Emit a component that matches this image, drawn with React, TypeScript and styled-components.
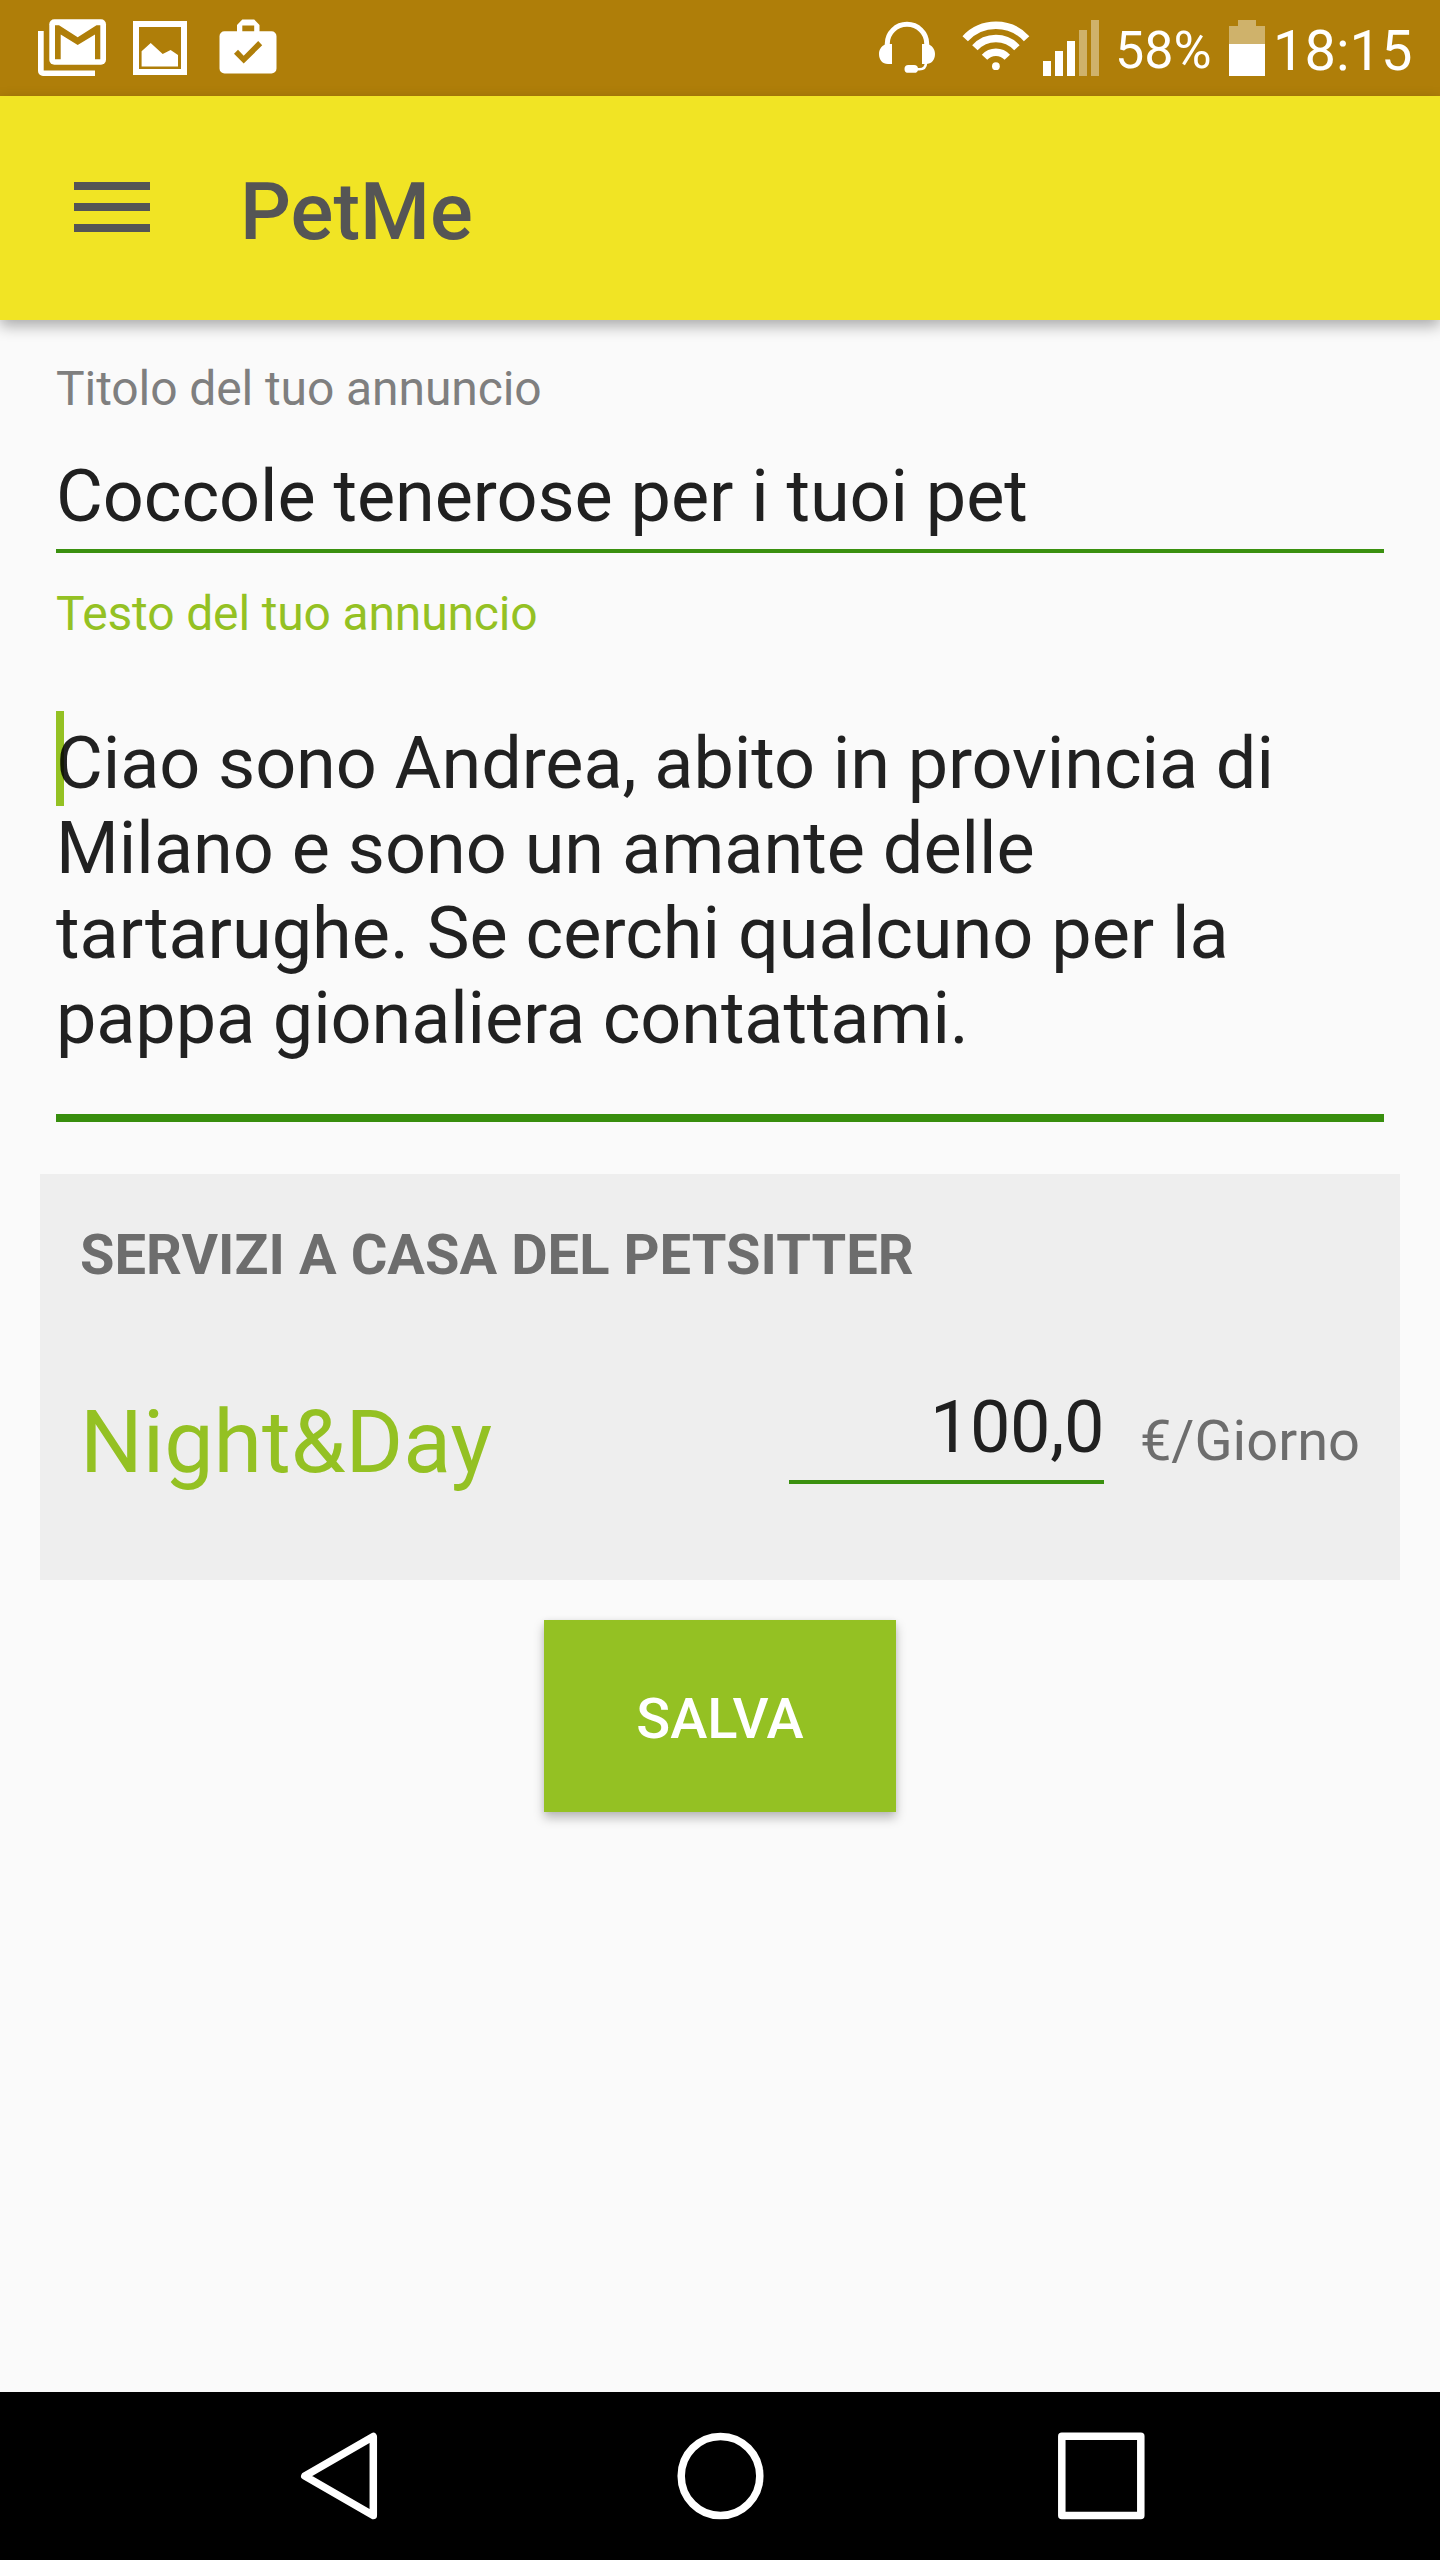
import React from "react";
import styled, { createGlobalStyle } from "styled-components";

const GlobalStyle = createGlobalStyle`
  * { box-sizing: border-box; }
  body {
    margin: 0;
    background: #fafafa;
    font-family: Roboto, "Liberation Sans", sans-serif;
  }
`;

const Screen = styled.div`
  width: 1440px;
  height: 2560px;
  display: flex;
  flex-direction: column;
  background: #fafafa;
  overflow: hidden;
`;

const StatusBar = styled.header`
  height: 96px;
  flex: none;
  display: flex;
  justify-content: space-between;
  background: #af7e09;
  color: #fff;
  padding: 0 28px 0 36px;
`;

const StatusGroup = styled.div`
  display: flex;
  align-items: flex-start;
`;

const StatusIcon = styled.svg<{ $gap?: number }>`
  display: block;
  flex: none;
  margin-left: ${(p) => p.$gap ?? 0}px;
`;

const StatusText = styled.span<{ $size: number; $width: number; $top: number; $gap: number }>`
  width: ${(p) => p.$width}px;
  margin: ${(p) => p.$top}px 0 0 ${(p) => p.$gap}px;
  font-size: ${(p) => p.$size}px;
  line-height: 60px;
  white-space: nowrap;
`;

const AppBar = styled.div`
  height: 224px;
  flex: none;
  display: flex;
  align-items: center;
  padding-left: 74px;
  background: #f1e424;
  box-shadow: 0 6px 14px rgba(0, 0, 0, 0.32);
  z-index: 1;
`;

const MenuButton = styled.div`
  width: 76px;
  height: 50px;
  margin-top: -2px;
  display: flex;
  flex-direction: column;
  justify-content: space-between;
`;

const MenuBar = styled.span`
  height: 8px;
  background: #555;
`;

const AppTitle = styled.h1`
  margin: 7px 0 0 90px;
  font-size: 80px;
  line-height: 96px;
  font-weight: 500;
  color: #555;
`;

const Content = styled.main`
  flex: 1;
  display: flex;
  flex-direction: column;
  padding: 41px 40px 0;
`;

const Field = styled.section`
  display: flex;
  flex-direction: column;
  margin: 0 16px 33px;
`;

const MessageField = styled(Field)`
  margin-bottom: 52px;
`;

const Label = styled.label<{ $active?: boolean }>`
  font-size: 48px;
  line-height: 56px;
  letter-spacing: ${(p) => (p.$active ? -0.15 : -0.09)}px;
  color: ${(p) => (p.$active ? "#94c123" : "#7f7f7f")};
`;

const TextLine = styled.div`
  margin-top: 38px;
  padding-bottom: 10px;
  border-bottom: 4px solid #3a900f;
  font-size: 72px;
  line-height: 84px;
  letter-spacing: -0.06px;
  color: #202020;
`;

const TextArea = styled.div`
  position: relative;
  margin-top: 79px;
  padding-bottom: 53px;
  border-bottom: 8px solid #388e0d;
  font-size: 72px;
  line-height: 85px;
  color: rgba(0, 0, 0, 0.87);
`;

const Caret = styled.span`
  position: absolute;
  left: 0;
  top: -10px;
  width: 8px;
  height: 95px;
  background: #94c123;
  z-index: -1;
`;

const AreaText = styled.div`
  isolation: isolate;
`;

const AreaLine = styled.div<{ $tracking: number }>`
  letter-spacing: ${(p) => p.$tracking}px;
  white-space: nowrap;
`;

const Card = styled.section`
  height: 406px;
  padding: 48px 40px 0;
  background: #eee;
`;

const CardTitle = styled.h2`
  margin: 0;
  font-size: 56px;
  line-height: 66px;
  font-weight: 700;
  letter-spacing: 0.05px;
  color: #6d6d6d;
`;

const ServiceRow = styled.div`
  display: flex;
  align-items: flex-start;
  margin-top: 97px;
`;

const ServiceName = styled.span`
  flex: 1;
  margin-top: 5px;
  font-size: 88px;
  line-height: 104px;
  color: #94c123;
`;

const Price = styled(TextLine)`
  width: 315px;
  margin-top: 1px;
  letter-spacing: -0.4px;
  text-align: right;
`;

const Unit = styled.span`
  width: 256px;
  margin-top: 23px;
  font-size: 56px;
  line-height: 66px;
  text-align: right;
  color: #6d6d6d;
`;

const SaveButton = styled.button`
  align-self: center;
  width: 352px;
  height: 192px;
  margin-top: 40px;
  padding: 6px 0 0;
  border: 0;
  background: #94c123;
  box-shadow: 0 6px 10px rgba(0, 0, 0, 0.26), 0 0 5px rgba(0, 0, 0, 0.06);
  font: 500 56px/66px Roboto, "Liberation Sans", sans-serif;
  color: #fff;
`;

const NavBar = styled.nav`
  height: 168px;
  flex: none;
  display: flex;
  align-items: center;
  justify-content: space-between;
  padding: 0 295px 0 300px;
  background: #000;
`;

const NavIcon = styled.svg`
  display: block;
  overflow: visible;
  fill: none;
  stroke: #fff;
  stroke-width: 7.5;
  stroke-linejoin: round;
`;

const MailIcon = () => (
  <StatusIcon width="72" height="96" viewBox="36 0 72 96">
    <path d="M38 31h5.7v39.6H95V76H43a5 5 0 0 1-5-5z" fill="#fff" />
    <rect x="49.3" y="19.3" width="56.7" height="45.5" rx="5" fill="#fff" />
    <path
      d="M55 25.3h4L77.7 37.2 96.5 25.3h3.8V59.3H95V34.6L77.7 45 60.7 34.6V59.3H55z"
      fill="#af7e09"
    />
  </StatusIcon>
);

const PictureIcon = () => (
  <StatusIcon $gap={25} width="54" height="96" viewBox="133 0 54 96">
    <path d="M133 21h54v54h-54zM139 27v42h42V27z" fill="#fff" fillRule="evenodd" />
    <path d="M141.6 51.3l9.1-8.3 12 11 7.9-4 7.4 5v11.5h-36.4z" fill="#fff" />
  </StatusIcon>
);

const BriefcaseIcon = () => (
  <StatusIcon $gap={32} width="58" height="96" viewBox="219 0 58 96">
    <path
      d="M237 31.2V25l5.3-5.5h11.9l5.3 5.5v6.2h12a5 5 0 0 1 5 5v32.3a5 5 0 0 1-5 5h-47a5 5 0 0 1-5-5V36.2a5 5 0 0 1 5-5zM242.3 25.5v5.7h11.9v-5.7z"
      fill="#fff"
      fillRule="evenodd"
    />
    <path d="M234 53.7l4-3.9 5.7 6 14.5-14.7 4 4.2-18.5 18.2z" fill="#af7e09" />
  </StatusIcon>
);

const HeadsetIcon = () => (
  <StatusIcon width="57" height="96" viewBox="879 0 57 96" fill="#fff">
    <path
      d="M887.3 46.5V43.5a19.5 19 0 0 1 39.4 0v3"
      fill="none"
      stroke="#fff"
      strokeWidth="5"
    />
    <path d="M892 44v20h-4c-5.5 0-9-4-9-10 0-4.5 2.5-8 6-9.5V44z" />
    <path d="M922 44v20h4c5.5 0 9-4 9-10 0-4.5-2.5-8-6-9.5V44z" />
    <rect x="904.5" y="65" width="13.5" height="7.8" rx="3.9" />
    <path d="M917 69.3h2.5c4 0 6.3-2 6.5-6.3" fill="none" stroke="#fff" strokeWidth="2.6" />
  </StatusIcon>
);

const WifiIcon = () => (
  <StatusIcon $gap={26} width="68" height="96" viewBox="961.5 0 68 96">
    <g fill="none" stroke="#fff" strokeWidth="7.4">
      <path d="M964.7 38.7A41.8 41.8 0 0 1 1026.1 38.7" />
      <path d="M974.4 47.7A28.5 28.5 0 0 1 1016.4 47.7" />
      <path d="M984 57.3A15.5 15.5 0 0 1 1006.8 57.3" />
    </g>
    <circle cx="995.4" cy="66.2" r="3.9" fill="#fff" />
  </StatusIcon>
);

const SIGNAL = [
  { top: 61, on: true },
  { top: 51, on: true },
  { top: 41, on: true },
  { top: 30, on: false },
  { top: 20, on: false },
];

const SignalIcon = () => (
  <StatusIcon $gap={13} width="56" height="96" viewBox="0 0 56 96">
    {SIGNAL.map((bar, i) => (
      <rect
        key={bar.top}
        x={i * 12}
        y={bar.top}
        width="8"
        height={76 - bar.top}
        fill={bar.on ? "#fff" : "#cfb26b"}
      />
    ))}
  </StatusIcon>
);

const BatteryIcon = () => (
  <StatusIcon width="36" height="96" viewBox="0 0 36 96">
    <path d="M9 20h18v6h9v18H0V26h9z" fill="#cfb26b" />
    <path d="M0 44h36v32H0z" fill="#fff" />
  </StatusIcon>
);

const MESSAGE = [
  { text: "Ciao sono Andrea, abito in provincia di", tracking: -0.08 },
  { text: "Milano e sono un amante delle", tracking: 0 },
  { text: "tartarughe. Se cerchi qualcuno per la", tracking: 0 },
  { text: "pappa gionaliera contattami.", tracking: -0.11 },
];

export default function App() {
  return (
    <>
      <GlobalStyle />
      <Screen>
        <StatusBar>
          <StatusGroup>
            <MailIcon />
            <PictureIcon />
            <BriefcaseIcon />
          </StatusGroup>
          <StatusGroup>
            <HeadsetIcon />
            <WifiIcon />
            <SignalIcon />
            <StatusText $size={52} $width={114} $top={21} $gap={16}>
              58%
            </StatusText>
            <BatteryIcon />
            <StatusText $size={56} $width={139} $top={21} $gap={8}>
              18:15
            </StatusText>
          </StatusGroup>
        </StatusBar>
        <AppBar>
          <MenuButton>
            <MenuBar />
            <MenuBar />
            <MenuBar />
          </MenuButton>
          <AppTitle>PetMe</AppTitle>
        </AppBar>
        <Content>
          <Field>
            <Label>Titolo del tuo annuncio</Label>
            <TextLine>Coccole tenerose per i tuoi pet</TextLine>
          </Field>
          <MessageField>
            <Label $active>Testo del tuo annuncio</Label>
            <TextArea>
              <AreaText>
                <Caret />
                {MESSAGE.map((line) => (
                  <AreaLine key={line.text} $tracking={line.tracking}>
                    {line.text}
                  </AreaLine>
                ))}
              </AreaText>
            </TextArea>
          </MessageField>
          <Card>
            <CardTitle>SERVIZI A CASA DEL PETSITTER</CardTitle>
            <ServiceRow>
              <ServiceName>Night&amp;Day</ServiceName>
              <Price>100,0</Price>
              <Unit>€/Giorno</Unit>
            </ServiceRow>
          </Card>
          <SaveButton>SALVA</SaveButton>
        </Content>
        <NavBar>
          <NavIcon width="78" height="90" viewBox="0 0 78 90">
            <path d="M4.8 45L73.3 5.5v79z" />
          </NavIcon>
          <NavIcon width="88" height="90" viewBox="0 0 88 90">
            <ellipse cx="46.5" cy="45" rx="39.3" ry="39.6" />
          </NavIcon>
          <NavIcon width="88" height="90" viewBox="0 0 88 90">
            <rect x="4.8" y="5.3" width="79" height="79.3" />
          </NavIcon>
        </NavBar>
      </Screen>
    </>
  );
}
